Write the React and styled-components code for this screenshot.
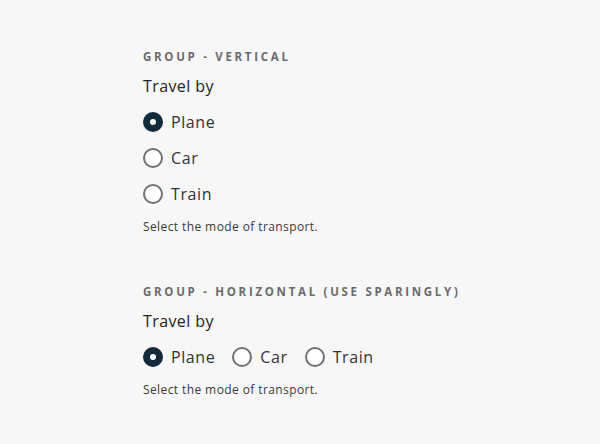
import React, { useState } from "react";
import styled, { createGlobalStyle } from "styled-components";

const GlobalStyle = createGlobalStyle`
  html, body {
    margin: 0;
    padding: 0;
    background: #f7f7f7;
  }
  body {
    font-family: "Open Sans", "Noto Sans", sans-serif;
    color: #1f1f1f;
  }
`;

const Page = styled.main`
  width: 600px;
  height: 444px;
  box-sizing: border-box;
  padding: 50px 0 0 143px;
  display: flex;
  flex-direction: column;
  gap: 50px;
`;

const Section = styled.section`
  display: flex;
  flex-direction: column;
`;

const Heading = styled.h2`
  margin: 0 0 10px;
  font-size: 11.5px;
  line-height: 14px;
  font-weight: 700;
  letter-spacing: 2.7px;
  color: #6b6b6b;
  text-transform: uppercase;
`;

const Fieldset = styled.fieldset`
  border: 0;
  margin: 0;
  padding: 0;
  min-width: 0;
`;

const Legend = styled.legend`
  padding: 0;
  font-size: 16px;
  line-height: 24px;
  letter-spacing: 0.4px;
  color: #222;
  margin-bottom: 12px;
`;

const Options = styled.div`
  display: flex;
  flex-direction: ${(p) => (p.$horizontal ? "row" : "column")};
  gap: ${(p) => (p.$horizontal ? "17px" : "12px")};
`;

const Option = styled.label`
  display: flex;
  align-items: center;
  gap: 8px;
  height: 24px;
  font-size: 16px;
  letter-spacing: 0.6px;
  color: #333;
  cursor: pointer;
`;

const Input = styled.input`
  appearance: none;
  margin: 0;
  width: 20px;
  height: 20px;
  border-radius: 50%;
  box-sizing: border-box;
  border: 2px solid #707070;
  background: #fff;
  cursor: pointer;

  &:checked {
    border: 7px solid #132a3b;
    background: #fff;
  }
`;

const Help = styled.p`
  margin: 13px 0 0;
  font-size: 12px;
  line-height: 16px;
  letter-spacing: 0.4px;
  color: #3a3a3a;
`;

const modes = ["Plane", "Car", "Train"];

const Group = ({ title, name, horizontal }) => {
  const [value, setValue] = useState("Plane");
  return (
    <Section>
      <Heading>{title}</Heading>
      <Fieldset>
        <Legend>Travel by</Legend>
        <Options $horizontal={horizontal}>
          {modes.map((m) => (
            <Option key={m}>
              <Input
                type="radio"
                name={name}
                checked={value === m}
                onChange={() => setValue(m)}
              />
              {m}
            </Option>
          ))}
        </Options>
      </Fieldset>
      <Help>Select the mode of transport.</Help>
    </Section>
  );
};

export default function App() {
  return (
    <>
      <GlobalStyle />
      <Page>
        <Group title="Group - Vertical" name="vertical" />
        <Group title="Group - Horizontal (use sparingly)" name="horizontal" horizontal />
      </Page>
    </>
  );
}
